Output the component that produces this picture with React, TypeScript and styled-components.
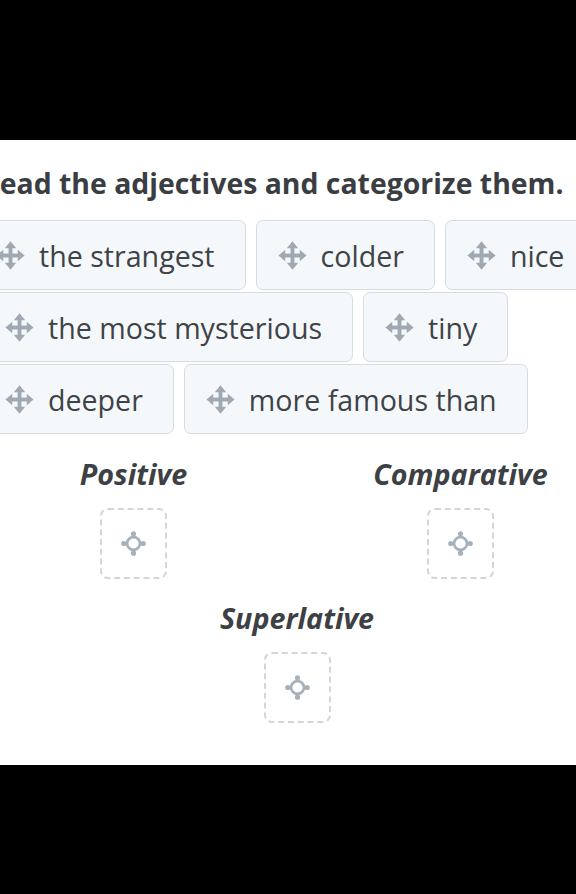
import React from "react";
import styled, { createGlobalStyle } from "styled-components";

const Global = createGlobalStyle`
  html, body { margin: 0; padding: 0; background: #000; overflow: hidden; }
  body { font-family: "Open Sans", "Noto Sans", sans-serif; }
`;

const Screen = styled.div`
  width: 576px;
  height: 894px;
  background: #000;
  overflow: hidden;
  display: flex;
  flex-direction: column;
`;

const Sheet = styled.main`
  margin-top: 140px;
  height: 625px;
  background: #fff;
  overflow: hidden;
`;

const Content = styled.div`
  width: 654px;
  margin-left: -30px;
  padding-top: 25px;
  display: flex;
  flex-direction: column;
`;

const Title = styled.h1`
  margin: 0 0 18px 11px;
  font-size: 28.4px;
  line-height: 37px;
  font-weight: 700;
  color: #3a3d42;
  white-space: nowrap;
`;

const Bank = styled.div`
  display: flex;
  flex-direction: column;
  gap: 2px;
`;

const ChipRow = styled.div<{ $indent: number }>`
  display: flex;
  gap: 10px;
  margin-left: ${(p) => p.$indent}px;
`;

const Chip = styled.div`
  flex: none;
  height: 70px;
  box-sizing: border-box;
  display: flex;
  align-items: center;
  gap: 14px;
  padding: 0 30px 0 21px;
  background: #f5f8fb;
  border: 1px solid #d6dce1;
  border-radius: 7px;
  font-size: 28.6px;
  color: #3f4348;
  white-space: nowrap;
`;

const Categories = styled.div`
  display: grid;
  grid-template-columns: 1fr 1fr;
  row-gap: 22px;
  margin-top: 23px;
`;

const Category = styled.section<{ $span?: boolean }>`
  display: flex;
  flex-direction: column;
  align-items: center;
  gap: 17px;
  ${(p) => (p.$span ? "grid-column: 1 / -1;" : "")}
`;

const Heading = styled.h2`
  margin: 0;
  font-size: 28.7px;
  line-height: 34px;
  font-weight: 700;
  font-style: italic;
  color: #3d4045;
`;

const DropZone = styled.div`
  width: 67px;
  height: 71px;
  box-sizing: border-box;
  border: 2px dashed #d3d6d9;
  border-radius: 8px;
  display: flex;
  align-items: center;
  justify-content: center;
`;

const MoveIcon = () => (
  <svg width="29" height="29" viewBox="0 0 24 24" fill="#a0a9b2" aria-hidden>
    <rect x="10.4" y="5" width="3.2" height="14" />
    <rect x="5" y="10.4" width="14" height="3.2" />
    <polygon points="12,0.3 7.3,6 16.7,6" />
    <polygon points="12,23.7 7.3,18 16.7,18" />
    <polygon points="0.3,12 6,7.3 6,16.7" />
    <polygon points="23.7,12 18,7.3 18,16.7" />
  </svg>
);

const TargetIcon = () => (
  <svg width="25" height="25" viewBox="0 0 24 24" aria-hidden>
    <g stroke="#a7b1ba" strokeWidth="2.6" fill="none">
      <circle cx="12" cy="12" r="6.2" />
      <line x1="12" y1="6" x2="12" y2="3" />
      <line x1="12" y1="18" x2="12" y2="21" />
      <line x1="6" y1="12" x2="3" y2="12" />
      <line x1="18" y1="12" x2="21" y2="12" />
    </g>
    <g fill="#a7b1ba">
      <circle cx="12" cy="2.7" r="2.5" />
      <circle cx="12" cy="21.3" r="2.5" />
      <circle cx="2.7" cy="12" r="2.5" />
      <circle cx="21.3" cy="12" r="2.5" />
    </g>
  </svg>
);

const rows: { indent: number; words: string[] }[] = [
  { indent: 4, words: ["the strangest", "colder", "nice"] },
  { indent: 13, words: ["the most mysterious", "tiny"] },
  { indent: 13, words: ["deeper", "more famous than"] },
];

const categories = [
  { name: "Positive" },
  { name: "Comparative" },
  { name: "Superlative", span: true },
];

export default function App() {
  return (
    <>
      <Global />
      <Screen>
        <Sheet>
          <Content>
            <Title>Read the adjectives and categorize them.</Title>
            <Bank>
              {rows.map((r, i) => (
                <ChipRow key={i} $indent={r.indent}>
                  {r.words.map((w) => (
                    <Chip key={w}>
                      <MoveIcon />
                      <span>{w}</span>
                    </Chip>
                  ))}
                </ChipRow>
              ))}
            </Bank>
            <Categories>
              {categories.map((c) => (
                <Category key={c.name} $span={c.span}>
                  <Heading>{c.name}</Heading>
                  <DropZone>
                    <TargetIcon />
                  </DropZone>
                </Category>
              ))}
            </Categories>
          </Content>
        </Sheet>
      </Screen>
    </>
  );
}
